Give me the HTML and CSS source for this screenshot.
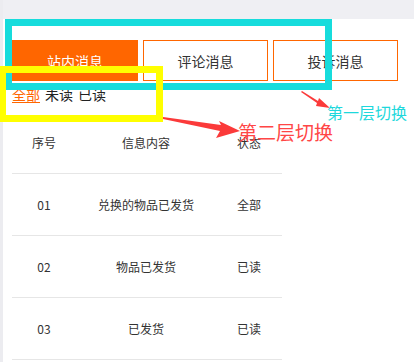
FILE: index.html
```html
<!DOCTYPE html>
<html lang="zh">
<head>
<meta charset="utf-8">
<link rel="stylesheet" href="styles.css">
</head>
<body>
<div class="page">
  <div class="topbar"></div>
  <div class="main">
    <div class="tabs">
      <div class="tab active">站内消息</div>
      <div class="tab">评论消息</div>
      <div class="tab">投诉消息</div>
    </div>
    <div class="subtabs">
      <span class="sub active">全部</span>
      <span class="sub">未读</span>
      <span class="sub">已读</span>
    </div>
    <div class="table">
      <div class="row head">
        <div class="c1">序号</div><div class="c2">信息内容</div><div class="c3">状态</div>
      </div>
      <div class="row">
        <div class="c1">01</div><div class="c2">兑换的物品已发货</div><div class="c3">全部</div>
      </div>
      <div class="row">
        <div class="c1">02</div><div class="c2">物品已发货</div><div class="c3">已读</div>
      </div>
      <div class="row">
        <div class="c1">03</div><div class="c2">已发货</div><div class="c3">已读</div>
      </div>
    </div>
  </div>

  <div class="mark cyan-box"></div>
  <div class="mark yellow-box"></div>
  <svg class="arrows" width="414" height="362" viewBox="0 0 414 362">
    <polygon fill="#fb3a3a" points="163,117 221,125 219,121 240,131 216,138 220,131 163,119"/>
    <polygon fill="#fb3a3a" points="302,91 318,101 319,98 330,108 316,106 317,103 301,92"/>
  </svg>
  <div class="note note-cyan">第一层切换</div>
  <div class="note note-red">第二层切换</div>
</div>
</body>
</html>
```
FILE: styles.css
```css
* { box-sizing: border-box; }
html, body { margin: 0; padding: 0; background: #fff; }
body {
  font-family: "Noto Sans CJK SC", "Noto Sans", sans-serif;
  color: #333;
  width: 414px;
  height: 362px;
  overflow: hidden;
}
.page {
  position: relative;
  width: 414px;
  height: 362px;
  border-left: 3px solid #ececf0;
}
.topbar {
  height: 19px;
  background: #efeff3;
}
.main {
  padding: 21px 0 0 9px;
}
.tabs {
  display: flex;
  gap: 5px;
}
.tab {
  width: 126px;
  height: 41px;
  border: 1px solid #ff6600;
  display: flex;
  align-items: center;
  justify-content: center;
  font-size: 14px;
  color: #333;
}
.tab + .tab { width: 125px; }
.tab.active {
  background: #ff6600;
  color: #fff;
}
.subtabs {
  display: flex;
  gap: 5px;
  height: 31px;
  padding-top: 5px;
  font-size: 14px;
}
.sub {
  line-height: 16px;
  height: 17px;
  color: #222;
}
.sub.active {
  color: #ff6600;
  border-bottom: 1px solid #ff6600;
}
.table {
  width: 270px;
  font-size: 12px;
  color: #333;
}
.row {
  display: flex;
  align-items: center;
  height: 62px;
  border-bottom: 1px solid #e6e6e6;
}
.row > div { text-align: center; }
.c1 { width: 64px; }
.c2 { width: 140px; }
.c3 { width: 66px; }

.mark { position: absolute; }
.cyan-box {
  left: 2px;
  top: 19px;
  width: 327px;
  height: 71px;
  border: 7px solid #17dcdc;
}
.yellow-box {
  left: -4px;
  top: 66px;
  width: 164px;
  height: 56px;
  border: 7px solid #ffff00;
}
.arrows {
  position: absolute;
  left: -3px;
  top: 0;
}
.note {
  position: absolute;
  white-space: nowrap;
  line-height: 1;
}
.note-cyan {
  left: 324px;
  top: 104px;
  font-size: 16px;
  color: #1ed8dc;
}
.note-red {
  left: 235px;
  top: 122px;
  font-size: 19px;
  color: #ff4646;
}
```
